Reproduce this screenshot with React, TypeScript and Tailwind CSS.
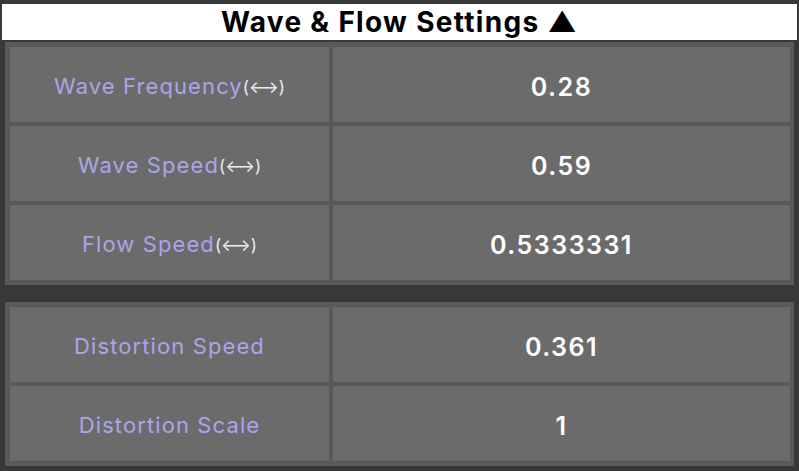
import React from 'react'

type Row = { label: string; arrows?: boolean; value: string }

const waveRows: Row[] = [
  { label: 'Wave Frequency', arrows: true, value: '0.28' },
  { label: 'Wave Speed', arrows: true, value: '0.59' },
  { label: 'Flow Speed', arrows: true, value: '0.5333331' },
]

const distortionRows: Row[] = [
  { label: 'Distortion Speed', value: '0.361' },
  { label: 'Distortion Scale', value: '1' },
]

function Panel({ rows, className }: { rows: Row[]; className?: string }) {
  return (
    <div className={'mx-[3px] bg-[#595959] pl-[5px] pr-[4px] py-[5px] grid grid-cols-[319px_1fr] gap-[4px] ' + (className ?? '')}>
      {rows.map((r) => (
        <React.Fragment key={r.label}>
          <div className="h-[75px] bg-[#6b6b6b] flex items-center justify-center pt-[3px]">
            <span className="text-[22px] tracking-[1.1px] text-[#aaa5ea]">{r.label}</span>
            {r.arrows && <span className="text-[17px] text-[#ebebf5] mt-[4px]">(⟷)</span>}
          </div>
          <div className="h-[75px] bg-[#6b6b6b] flex items-center justify-center pt-[6px]">
            <span className="text-[25px] tracking-[1.5px] font-semibold text-white">{r.value}</span>
          </div>
        </React.Fragment>
      ))}
    </div>
  )
}

export default function App() {
  return (
    <div className="w-[799px] h-[471px] bg-[#383838] flex flex-col pt-[4px] px-[2px] font-['Inter',sans-serif]">
      <div className="h-[36px] bg-white flex items-center justify-center text-[28px] tracking-[1.3px] font-bold text-black">
        Wave &amp; Flow Settings ▲
      </div>
      <Panel rows={waveRows} className="mt-[2px]" />
      <Panel rows={distortionRows} className="mt-[17px]" />
    </div>
  )
}
